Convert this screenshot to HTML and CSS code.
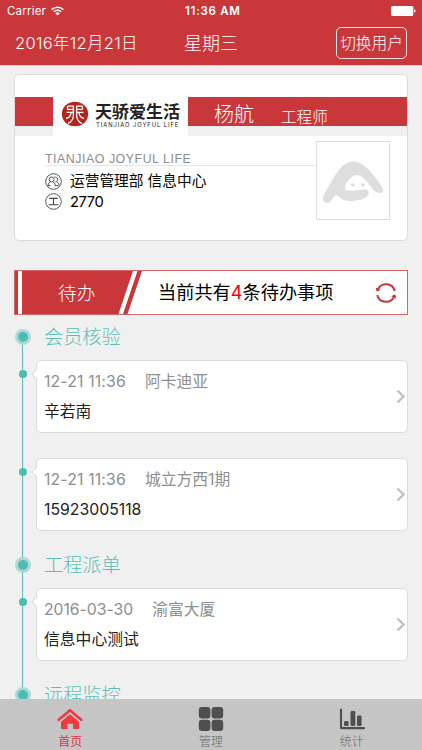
FILE: index.html
```html
<!DOCTYPE html>
<html lang="zh-CN">
<head>
<meta charset="utf-8">
<meta name="viewport" content="width=device-width, initial-scale=1">
<title>首页</title>
<link rel="stylesheet" href="styles.css">
</head>
<body>
<div class="app">
  <header class="header">
    <div class="status">
      <span class="carrier">Carrier</span>
      <svg class="wifi" width="13" height="10" viewBox="0 0 13 10" fill="none" stroke="#fff" stroke-width="1.6"><path d="M.7 3.6a8.3 8.3 0 0 1 11.6 0M2.8 5.8a5.3 5.3 0 0 1 7.4 0"/><path d="M4.3 7.3a3.1 3.1 0 0 1 4.4 0L6.5 9.6z" fill="#fff" stroke="none"/></svg>
      <span class="clock">11:36 AM</span>
      <svg class="battery" width="25" height="10" viewBox="0 0 25 10" fill="#fff"><rect width="22.3" height="10" rx="1.5"/><path d="M23.1 3.3q1.5.3 1.5 1.7t-1.5 1.7z"/></svg>
    </div>
    <div class="nav">
      <span class="date">2016年12月21日</span>
      <span class="weekday">星期三</span>
      <button class="switch">切换用户</button>
    </div>
  </header>

  <main class="content">
    <section class="profile">
      <div class="band">
        <div class="logo">
          <svg width="28" height="26" viewBox="0 0 28 26"><ellipse cx="14" cy="13" rx="13.2" ry="12.2" fill="#b3241f"/><g fill="none" stroke="#fff" stroke-width="1.3"><path d="M6.500 5.200h5.900v8.800q0 6-5.400 8.500M21.500 5.200h-5.900v8.800q0 6 5.400 8.500M6 8.300h6M16 8.300h6M5.500 11.400h6.500M16 11.400h6.500M6.500 5.200v2.500M21.500 5.200v2.500M10 12q-.5 4.500-5 5.500M18 12q.5 4.500 5 5.500"/></g></svg>
          <div class="brand"><b>天骄爱生活</b><small>TIANJIAO JOYFUL LIFE</small></div>
        </div>
        <span class="name">杨航</span>
        <span class="role">工程师</span>
      </div>
      <div class="details">
        <div class="info">
          <div class="motto">TIANJIAO JOYFUL LIFE</div>
          <div class="row">
            <svg width="17" height="17" viewBox="0 0 17 17" fill="none" stroke="#444" stroke-width=".9"><circle cx="8.500" cy="8.500" r="7.800"/><circle cx="6.600" cy="6.400" r="2.500"/><path d="M2.800 13q.2-3.200 2.600-4.300M7.800 8.700q2.400 1 2.800 4.600M9.300 4.300a2.400 2.400 0 1 1 .9 4.600M11.500 8.700q2.600 1 2.700 3.600M3 12.600h2.500M10.600 12.600h3"/></svg>
            <span>运营管理部 信息中心</span>
          </div>
          <div class="row">
            <svg width="17" height="17" viewBox="0 0 17 17" fill="none" stroke="#444"><circle cx="8.500" cy="8.500" r="7.800" stroke-width=".9"/><path d="M4.200 5.400h8.600M8.500 5.400v6.300M3.700 11.700h9.600" stroke-width="1.100"/></svg>
            <span class="num">2770</span>
          </div>
        </div>
        <div class="avatar">
          <svg width="62" height="44" viewBox="0 0 62 44"><path d="M1.200 35.500C7 24 15 10 21 4.500Q32-3.500 42 4.500C49 10 55 18 60.600 27Q62.500 31.500 58 32Q54.500 32.500 51 28.500C47 23 43 17.500 38.500 15Q34 12.500 29.500 16Q24.500 20.500 23 26Q22 29.500 27 29.500Q36 30 42 28.500Q47.500 28 46.500 33Q45 38 34 39.500Q22 41.500 17.500 36Q15 33.500 13.500 34.500Q10.500 37 9 40Q6 43.500 2.500 41Q-.5 39 1.200 35.500Z" fill="#dfdddf"/><ellipse cx="31" cy="24" rx="2" ry="1.800" fill="#dfdddf"/><ellipse cx="41" cy="24" rx="2" ry="1.800" fill="#dfdddf"/></svg>
        </div>
      </div>
    </section>

    <section class="todo">
      <svg class="ribbon" width="128" height="43" viewBox="0 0 128 43"><path d="M0 0h3v43H0zM7 0h111L103.500 43H7zM122.500 0h4.500L112.500 43H108z" fill="#c9373b"/></svg>
      <span class="todo-label">待办</span>
      <span class="todo-text">当前共有<em>4</em>条待办事项</span>
      <svg class="refresh" width="22" height="22" viewBox="0 0 22 22"><g fill="none" stroke="#c4383c" stroke-width="2"><path d="M2.600 8.200a9 9 0 0 1 17.200.8M19.400 13.800a9 9 0 0 1-17.200-.8"/></g><path d="M.7 5.400l1 4.400 4-2zM21.300 16.600l-1-4.400-4 2z" fill="#c4383c"/></svg>
    </section>

    <section class="timeline">
      <h2 class="group">会员核验</h2>
      <article class="task"><p class="meta"><time>12-21 11:36</time><span>阿卡迪亚</span></p><p class="title">辛若南</p><svg class="chevron" width="10" height="15" viewBox="0 0 10 15"><path d="M1.500 1.500l6 6-6 6"/></svg></article>
      <article class="task"><p class="meta"><time>12-21 11:36</time><span>城立方西1期</span></p><p class="title num">15923005118</p><svg class="chevron" width="10" height="15" viewBox="0 0 10 15"><path d="M1.500 1.500l6 6-6 6"/></svg></article>
      <h2 class="group">工程派单</h2>
      <article class="task"><p class="meta"><time class="full">2016-03-30</time><span>渝富大厦</span></p><p class="title">信息中心测试</p><svg class="chevron" width="10" height="15" viewBox="0 0 10 15"><path d="M1.500 1.500l6 6-6 6"/></svg></article>
      <h2 class="group">远程监控</h2>
    </section>
  </main>

  <nav class="tabs">
    <a class="tab active"><svg width="26" height="24" viewBox="0 0 26 24"><path d="M1.800 12.800L13 3.200l11.200 9.600" fill="none" stroke="#ee3a40" stroke-width="2.600" stroke-linecap="round" stroke-linejoin="round"/><path d="M13 7.300l9 7.500v6.400q0 .8-.8.800H16v-5.200h-5.500V22H4.800q-.8 0-.8-.8v-6.400z" fill="#ee3a40"/></svg><span>首页</span></a>
    <a class="tab"><svg width="26" height="24" viewBox="0 0 26 24" fill="#4f4f4f"><rect x=".8" width="11.600" height="11.400" rx="3"/><rect x="13.600" width="11.600" height="11.400" rx="3"/><rect x=".8" y="12.700" width="11.600" height="11.300" rx="3"/><rect x="13.600" y="12.700" width="11.600" height="11.300" rx="3"/></svg><span>管理</span></a>
    <a class="tab"><svg width="26" height="24" viewBox="0 0 26 24" fill="#4f4f4f"><path d="M2 2.600v18.500h23" fill="none" stroke="#4f4f4f" stroke-width="2.100" stroke-linecap="round" stroke-linejoin="round"/><rect x="5" y="14" width="4.600" height="5" rx="1.200"/><rect x="11.500" y="4" width="4.800" height="15" rx="1.200"/><rect x="18" y="8.600" width="4.600" height="10.400" rx="1.200"/></svg><span>统计</span></a>
  </nav>
</div>
</body>
</html>
```

FILE: styles.css
```css
*, *::before, *::after { box-sizing: border-box; margin: 0; padding: 0; }
body {
  font-family: Inter, "Noto Sans CJK SC", sans-serif;
  background: #f0f0f0;
  color: #000;
}
svg { display: block; flex: none; }
.app { height: 750px; display: flex; flex-direction: column; overflow: hidden; }

.header { height: 66px; flex: none; background: #c9373b; border-bottom: 1px solid #f5c9cb; color: #fff; }
.status { height: 21px; padding: 0 6px 0 7px; display: grid; grid-template-columns: 44px 134px auto 1fr; align-items: center; font-size: 11.5px; line-height: 22px; }
.carrier { letter-spacing: .2px; }
.clock { font-weight: 600; letter-spacing: .7px; }
.battery { justify-self: end; }
.nav { height: 44px; padding: 0 15px; display: grid; grid-template-columns: 169px 1fr 71px; align-items: center; font-weight: 300; }
.date { margin-top: -2px; font-size: 16.5px; letter-spacing: .3px; }
.weekday { margin-top: -2px; font-size: 18px; }
.switch { height: 32px; padding-top: 1px; border: 1px solid #fbe0e1; border-radius: 5px; background: none; color: #fff; font: inherit; font-size: 15.7px; line-height: 29px; }

.content { flex: 1; min-height: 0; padding: 8px 14px 0; }
.profile { height: 167px; background: #fff; border: 1px solid #dcdcdc; border-radius: 5px; padding-top: 22px; }
.band { height: 39px; display: flex; align-items: flex-start; background: linear-gradient(#c9373b 29px, #f0f0f0 29px); color: #fff; line-height: 36px; }
.logo { width: 135px; height: 39px; margin-left: 38px; padding: 4px 0 0 8px; display: flex; background: #fff; color: #222; }
.brand { padding: 2px 0 0 6px; display: flex; flex-direction: column; white-space: nowrap; }
.brand b { font-size: 17px; line-height: 19px; font-weight: 700; }
.brand small { padding-left: 1px; font-size: 5.8px; line-height: 6px; letter-spacing: .95px; }
.name { margin-left: 26px; font-size: 20px; font-weight: 300; }
.role { margin-left: 27px; font-size: 15.6px; font-weight: 300; line-height: 41px; }
.details { height: 83px; padding: 5px 17px 0 30px; display: flex; }
.info { width: 271px; padding-top: 11px; }
.motto { height: 14px; margin-bottom: 5px; border-bottom: 1px solid #e5e5e5; color: #8d8d8d; font: 12.4px/15px "Liberation Sans", sans-serif; letter-spacing: .52px; white-space: nowrap; }
.row { height: 20.5px; display: flex; align-items: center; gap: 8px; font-size: 14.7px; line-height: 20px; white-space: nowrap; }
.row .num { letter-spacing: -.4px; }
.avatar { width: 74px; height: 79px; border: 1px solid #ddd; background: #fff; padding: 19px 0 0 5px; }

.todo { height: 45px; margin-top: 29px; display: grid; grid-template-columns: 43px 100px 1fr 32px; align-items: center; border: 1px solid #d4696c; background: #fff; position: relative; }
.ribbon { position: absolute; left: 0; top: 0; }
.todo-label { grid-column: 2; margin-top: -3px; position: relative; color: #fff; font-size: 18.7px; font-weight: 300; }
.todo-text { margin-top: -3px; font-size: 18.2px; white-space: nowrap; }
.todo-text em { font-style: normal; color: #f00; }

.timeline { position: relative; padding-left: 22px; }
.timeline::before { content: ""; position: absolute; left: 8px; top: 22px; width: 1px; height: 370px; background: #5bbfb8; }
.group { height: 45px; padding-left: 8px; position: relative; color: #5bbfb8; font-size: 19.2px; line-height: 45px; font-weight: 300; }
.group::before { content: ""; position: absolute; left: -21.5px; top: 13.5px; width: 16px; height: 16px; border: 3.5px solid #add9d7; border-radius: 50%; background: #50bab4; }
.task { height: 72.5px; margin-bottom: 25.5px; padding: 9px 7px; position: relative; background: #fff; border: 1px solid #dcdcdc; border-radius: 5px; }
.task + .group { margin-top: -13px; }
.task::before { content: ""; position: absolute; left: -18.5px; top: 9px; width: 8px; height: 8px; border-radius: 50%; background: #50bab4; }
.task::after { content: ""; position: absolute; left: -4.5px; top: 9px; width: 8px; height: 8px; background: #fff; border: 1px solid #dcdcdc; border-width: 0 0 1px 1px; transform: rotate(45deg); }
.meta { display: flex; gap: 19px; color: #8e8e8e; font-size: 15.8px; line-height: 23px; }
.meta time { letter-spacing: .15px; }
.meta .full { letter-spacing: -.05px; }
.title { margin-top: 7px; color: #222; font-size: 15.8px; line-height: 23px; }
.title.num { letter-spacing: 0; }
.chevron { position: absolute; right: 1.5px; top: 28px; fill: none; stroke: #bfbfbf; stroke-width: 2.3; }

.tabs { height: 51px; flex: none; display: grid; grid-template-columns: repeat(3, 1fr); background: #c5c5c5; position: relative; }
.tab { padding-top: 8px; display: flex; flex-direction: column; align-items: center; color: #666; font-size: 12px; font-weight: 300; line-height: 21px; }
.tab.active { color: #d8393d; font-weight: 400; }
```
